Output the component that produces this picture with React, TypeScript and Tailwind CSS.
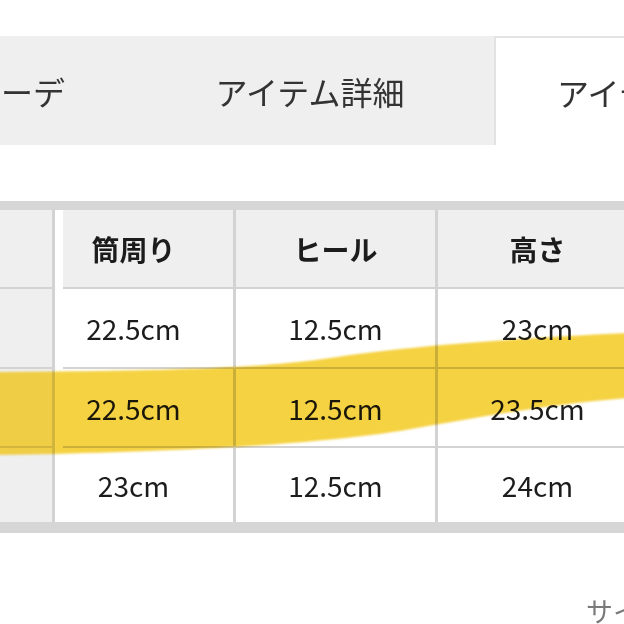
const rows = [
  ['22.5cm', '12.5cm', '23cm'],
  ['22.5cm', '12.5cm', '23.5cm'],
  ['23cm', '12.5cm', '24cm'],
];
const heads = ['筒周り', 'ヒール', '高さ'];
const rowHeights = ['h-[78px]', 'h-[77px]', 'h-[74px]'];

const stroke =
  'M-4,372 C120,371 250,370 330,358 C400,347 500,339 628,333 L628,398 C540,405 470,419 400,431 C320,443 200,452 -4,455 Z';

function Cells({ items, bold }: { items: string[]; bold?: boolean }) {
  return (
    <>
      {items.map((t, i) => (
        <div
          key={i}
          className={`shrink-0 flex items-center justify-center ${i > 0 ? 'w-[202px] border-l-[3px] border-[#d3d3d3]' : 'w-[199px]'} ${bold ? 'font-bold' : ''}`}
        >
          {t}
        </div>
      ))}
    </>
  );
}

export default function App() {
  return (
    <div
      className="relative w-[624px] h-[624px] overflow-hidden bg-white text-[#1c1c1c]"
      style={{ fontFamily: '"Noto Sans CJK JP", "Noto Sans", sans-serif' }}
    >
      <div className="h-[36px]" />

      {/* tabs */}
      <div className="flex h-[109px] text-[32px] text-[#333]">
        <div className="w-[126px] shrink-0 bg-[#efefef] flex items-center justify-end pr-[61px] overflow-hidden whitespace-nowrap">
          おすすめコーデ
        </div>
        <div className="w-[368px] shrink-0 bg-[#efefef] flex items-center justify-center whitespace-nowrap">
          アイテム詳細
        </div>
        <div className="flex-1 bg-white border-l-2 border-t-2 border-[#e3e3e3] flex items-center pl-[61px] overflow-hidden whitespace-nowrap">
          アイテムサイズ
        </div>
      </div>

      {/* size table */}
      <div className="mt-[56px] border-t-[9px] border-b-[11px] border-[#d6d6d6] flex text-[28px]">
        <div className="w-[63px] shrink-0 flex bg-white">
          <div className="w-[52px] bg-[#efefef] border-r-[3px] border-[#d3d3d3] box-content flex flex-col">
            <div className="h-[77px]" />
            {rowHeights.map((h, i) => (
              <div key={i} className={`${h} border-t-2 border-[#d3d3d3] box-content`} />
            ))}
          </div>
        </div>
        <div className="flex-1 overflow-hidden">
          <div className="ml-[-29px] flex flex-col">
            <div className="h-[77px] flex bg-[#efefef]">
              <Cells items={heads} bold />
            </div>
            {rows.map((r, i) => (
              <div key={i} className={`${rowHeights[i]} flex border-t-2 border-[#d3d3d3] box-content`}>
                <Cells items={r} />
              </div>
            ))}
          </div>
        </div>
      </div>

      <div className="mt-[64px] pl-[586px] whitespace-nowrap text-[27px] leading-none text-[#7a7a7a]">
        サイズについて
      </div>

      {/* marker stroke */}
      <svg
        className="absolute inset-0 pointer-events-none mix-blend-multiply"
        width="624"
        height="624"
        viewBox="0 0 624 624"
      >
        <defs>
          <filter id="soft" x="-5%" y="-20%" width="110%" height="140%">
            <feGaussianBlur stdDeviation="1.3" />
          </filter>
          <clipPath id="left">
            <rect x="-10" y="0" width="65" height="624" />
          </clipPath>
          <clipPath id="right">
            <rect x="55" y="0" width="580" height="624" />
          </clipPath>
        </defs>
        <g filter="url(#soft)">
          <path d={stroke} fill="#ffdb4a" clipPath="url(#left)" />
          <path d={stroke} fill="#f5d243" clipPath="url(#right)" />
        </g>
      </svg>
    </div>
  );
}
